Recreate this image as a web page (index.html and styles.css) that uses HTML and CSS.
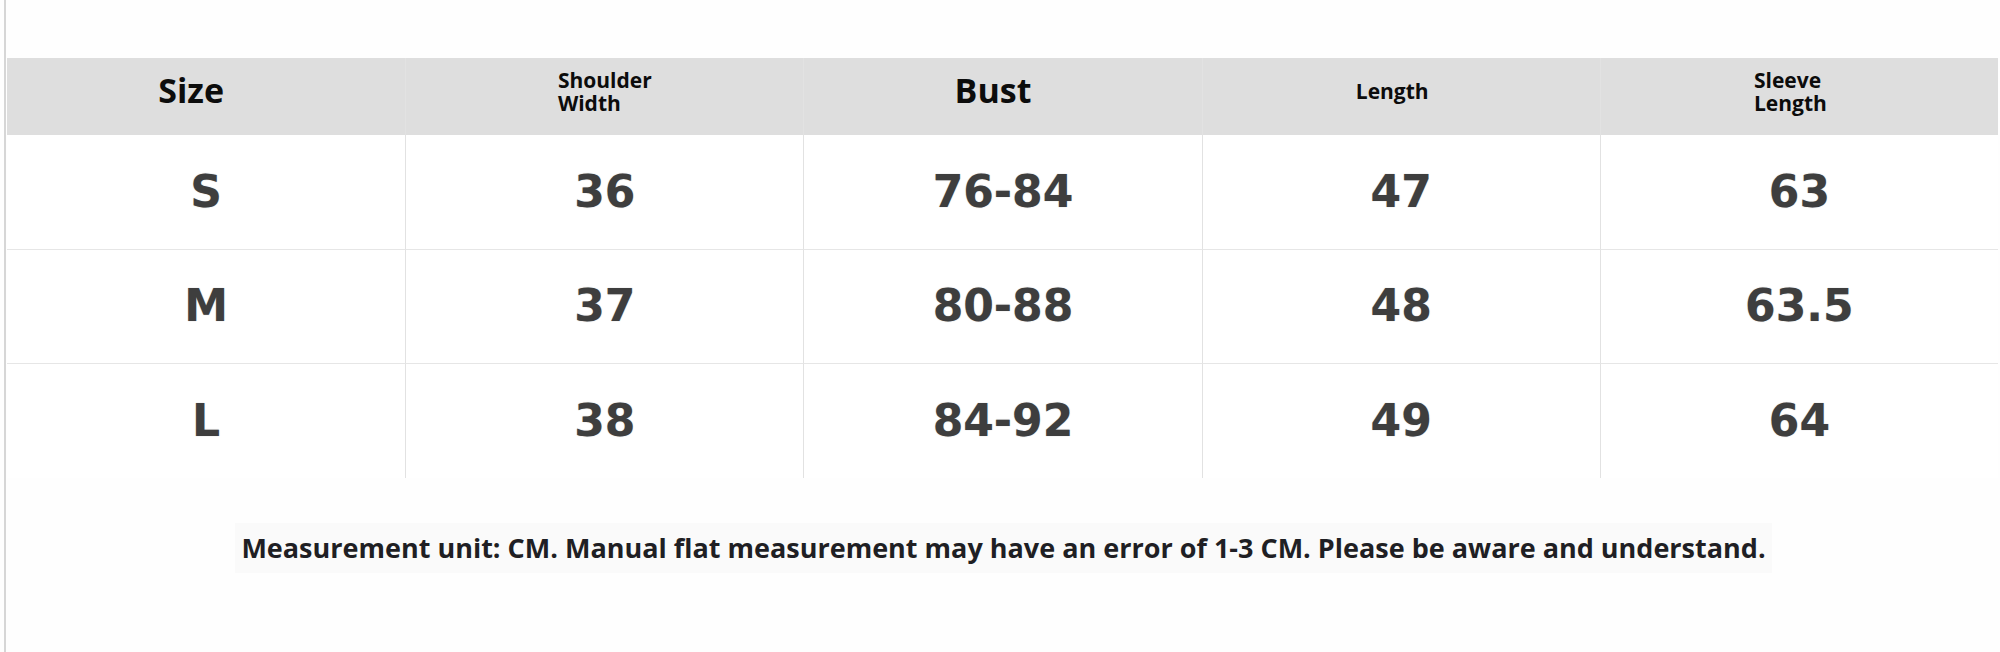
FILE: index.html
```html
<!DOCTYPE html>
<html lang="en">
<head>
<meta charset="utf-8">
<title>Size Chart</title>
<link rel="stylesheet" href="styles.css">
</head>
<body>
<div class="page">
  <div class="sheet">
    <div class="table">
      <div class="hcell big shift-l">Size</div>
      <div class="hcell small"><span class="stack">Shoulder<br>Width</span></div>
      <div class="hcell big shift-m">Bust</div>
      <div class="hcell small"><span class="stack shift-s">Length</span></div>
      <div class="hcell small"><span class="stack shift-s">Sleeve<br>Length</span></div>

      <div class="cell first">S</div>
      <div class="cell">36</div>
      <div class="cell">76-84</div>
      <div class="cell">47</div>
      <div class="cell">63</div>

      <div class="cell first line">M</div>
      <div class="cell line">37</div>
      <div class="cell line">80-88</div>
      <div class="cell line">48</div>
      <div class="cell line">63.5</div>

      <div class="cell first line">L</div>
      <div class="cell line">38</div>
      <div class="cell line">84-92</div>
      <div class="cell line">49</div>
      <div class="cell line">64</div>
    </div>
    <div class="note">
      <span class="note-text">Measurement unit: CM. Manual flat measurement may have an error of 1-3 CM. Please be aware and understand.</span>
    </div>
  </div>
</div>
</body>
</html>
```

FILE: styles.css
```css
html, body {
  margin: 0;
  padding: 0;
  background: #fefefe;
}

.page {
  width: 2000px;
  height: 652px;
  padding-left: 4px;
  box-sizing: border-box;
  overflow: hidden;
}

.sheet {
  height: 100%;
  border-left: 2px solid #d6d6d6;
  padding-left: 1px;
  padding-top: 58px;
  box-sizing: border-box;
}

.table {
  width: 1991px;
  display: grid;
  grid-template-columns: repeat(5, 1fr);
  grid-template-rows: 77px 114px 114px 115px;
}

.hcell {
  background: #dedede;
  display: flex;
  align-items: center;
  justify-content: center;
  box-sizing: border-box;
  font-family: "Open Sans", "Noto Sans", sans-serif;
  font-weight: 700;
  color: #0c0c0c;
}

.hcell + .hcell {
  border-left: 1px solid #e2e2e2;
}

.hcell.big {
  font-size: 34px;
  line-height: 40px;
  padding-bottom: 13px;
}

.hcell.small {
  font-size: 21px;
  line-height: 23px;
  padding-bottom: 10px;
}

.stack {
  display: inline-block;
  text-align: left;
}

.shift-l {
  padding-right: 30px;
}

.shift-m {
  padding-right: 20px;
}

.shift-s {
  margin-right: 18px;
}

.cell {
  background: #fff;
  display: flex;
  align-items: center;
  justify-content: center;
  border-left: 1px solid #e2e2e2;
  box-sizing: border-box;
  padding-bottom: 2px;
  font-family: "DejaVu Sans", Verdana, sans-serif;
  font-weight: 700;
  font-size: 44px;
  color: #3e3e3e;
  text-shadow: 0 0 1px rgba(60, 60, 60, 0.45);
}

.cell.first {
  border-left: none;
}

.cell.line {
  border-top: 1px solid #e6e6e6;
}

.note {
  display: flex;
  justify-content: center;
  margin-top: 45px;
}

.note-text {
  display: inline-block;
  background: #fafafa;
  padding: 7px 6px;
  font-family: "Open Sans", "Noto Sans", sans-serif;
  font-weight: 700;
  font-size: 27px;
  line-height: 36px;
  color: #1f1f24;
}
```
